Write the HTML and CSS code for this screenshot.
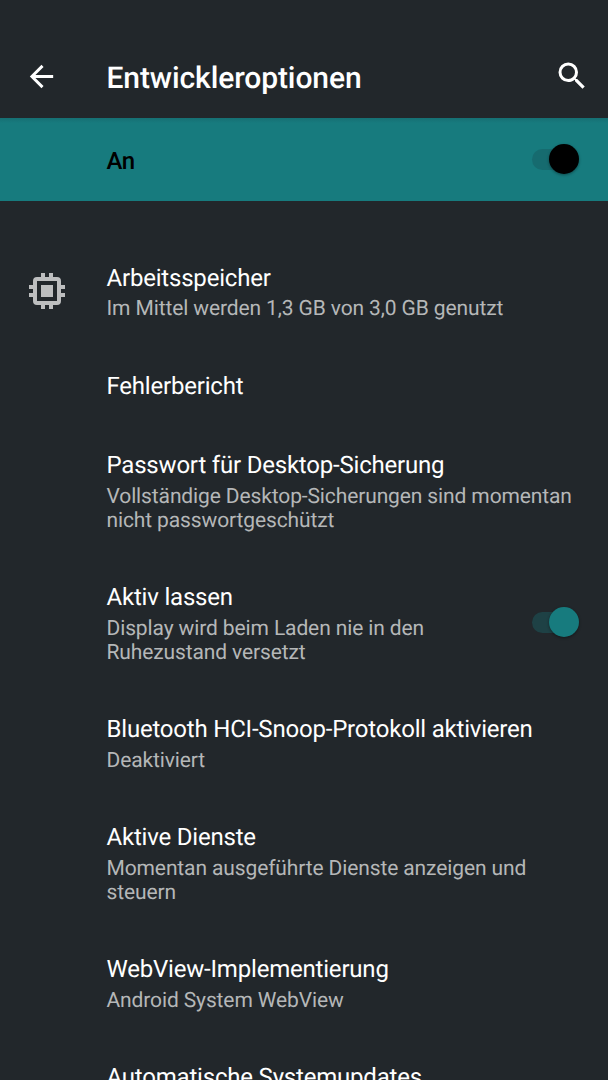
FILE: index.html
```html
<!DOCTYPE html>
<html lang="de">
<head>
<meta charset="utf-8">
<title>Entwickleroptionen</title>
<link rel="stylesheet" href="styles.css">
</head>
<body>
<div class="screen">
  <header class="toolbar">
    <svg class="back" viewBox="0 0 24 24"><path d="M20 11H7.83l5.59-5.59L12 4l-8 8 8 8 1.41-1.41L7.83 13H20z"/></svg>
    <h1>Entwickleroptionen</h1>
    <svg class="search" viewBox="0 0 24 24"><path d="M15.5 14h-.79l-.28-.27A6.47 6.47 0 0 0 16 9.5 6.5 6.5 0 1 0 9.5 16c1.61 0 3.09-.59 4.23-1.57l.27.28v.79l5 4.99L20.49 19zm-6 0a4.5 4.5 0 1 1 0-9 4.5 4.5 0 0 1 0 9z"/></svg>
  </header>
  <div class="master"><span class="label">An</span><span class="switch dark"><i></i></span></div>
  <main class="list">
    <section class="row two">
      <svg class="chip" viewBox="0 0 24 24"><path d="M15 9H9v6h6zm6 2V9h-2V7a2 2 0 0 0-2-2h-2V3h-2v2h-2V3H9v2H7a2 2 0 0 0-2 2v2H3v2h2v2H3v2h2v2a2 2 0 0 0 2 2h2v2h2v-2h2v2h2v-2h2a2 2 0 0 0 2-2v-2h2v-2h-2v-2zm-4 6H7V7h10z"/></svg>
      <div class="text"><h2>Arbeitsspeicher</h2><p>Im Mittel werden 1,3 GB von 3,0 GB genutzt</p></div>
    </section>
    <section class="row one"><div class="text"><h2>Fehlerbericht</h2></div></section>
    <section class="row three"><div class="text"><h2>Passwort für Desktop-Sicherung</h2><p>Vollständige Desktop-Sicherungen sind momentan<br>nicht passwortgeschützt</p></div></section>
    <section class="row three"><div class="text"><h2>Aktiv lassen</h2><p>Display wird beim Laden nie in den<br>Ruhezustand versetzt</p></div><span class="switch"><i></i></span></section>
    <section class="row two"><div class="text"><h2>Bluetooth HCI-Snoop-Protokoll aktivieren</h2><p>Deaktiviert</p></div></section>
    <section class="row three"><div class="text"><h2>Aktive Dienste</h2><p>Momentan ausgeführte Dienste anzeigen und<br>steuern</p></div></section>
    <section class="row two"><div class="text"><h2>WebView-Implementierung</h2><p>Android System WebView</p></div></section>
    <section class="row one"><div class="text"><h2>Automatische Systemupdates</h2></div></section>
  </main>
</div>
</body>
</html>
```
FILE: styles.css
```css
* { box-sizing: border-box; margin: 0; padding: 0; }
body { background: #22272b; font-family: Roboto, sans-serif; color: #fff; text-rendering: geometricPrecision; }
.screen { height: 1080px; overflow: hidden; }
svg { display: block; fill: currentColor; flex: none; }
.toolbar { height: 118px; padding: 36px 18px 0 24px; display: flex; align-items: center; }
.back { width: 35px; height: 35px; margin: 0 47.5px 1px 0; }
.toolbar h1 { flex: 1; padding-top: 4px; font-size: 30px; line-height: 36px; font-weight: 500; letter-spacing: -0.1px; white-space: nowrap; }
.search { width: 36px; height: 36px; margin-bottom: 2px; }
.master { height: 83px; padding: 0 29px 1px 106.5px; display: flex; align-items: center; justify-content: space-between; background: linear-gradient(#166f73, #177b7e 5px); color: #000; }
.label { padding-top: 4px; font-size: 24px; font-weight: 500; letter-spacing: -0.5px; }
.switch { width: 47px; height: 30px; display: flex; align-items: center; justify-content: flex-end; flex: none; }
.switch::before { content: ""; width: 42px; height: 21px; margin-right: -25px; border-radius: 11px; background: #1e4145; }
.switch i { width: 30px; height: 30px; border-radius: 50%; background: #177b7e; box-shadow: 0 1px 3px rgba(0,0,0,.4); }
.dark::before { background: #166b6f; }
.dark i { background: #000; }
.list { padding-top: 37px; }
.row { display: flex; align-items: center; padding: 0 29px 0 106.5px; }
.row .switch { margin-bottom: 2px; }
.one { height: 79px; }
.one .text { padding-top: 1px; }
.two { height: 108px; }
.three { height: 132px; }
.text { flex: 1; white-space: nowrap; }
.chip { width: 48px; height: 48px; margin: 0 35.5px 2px -83.5px; color: #bdbebf; }
.row h2 { font-size: 24px; font-weight: 400; line-height: 32px; letter-spacing: -0.2px; }
.row p { margin-top: 4px; font-size: 21px; line-height: 24px; letter-spacing: -0.12px; color: #b5b7b8; }
.chip + .text p { margin-top: 3px; margin-bottom: 1px; }
```
